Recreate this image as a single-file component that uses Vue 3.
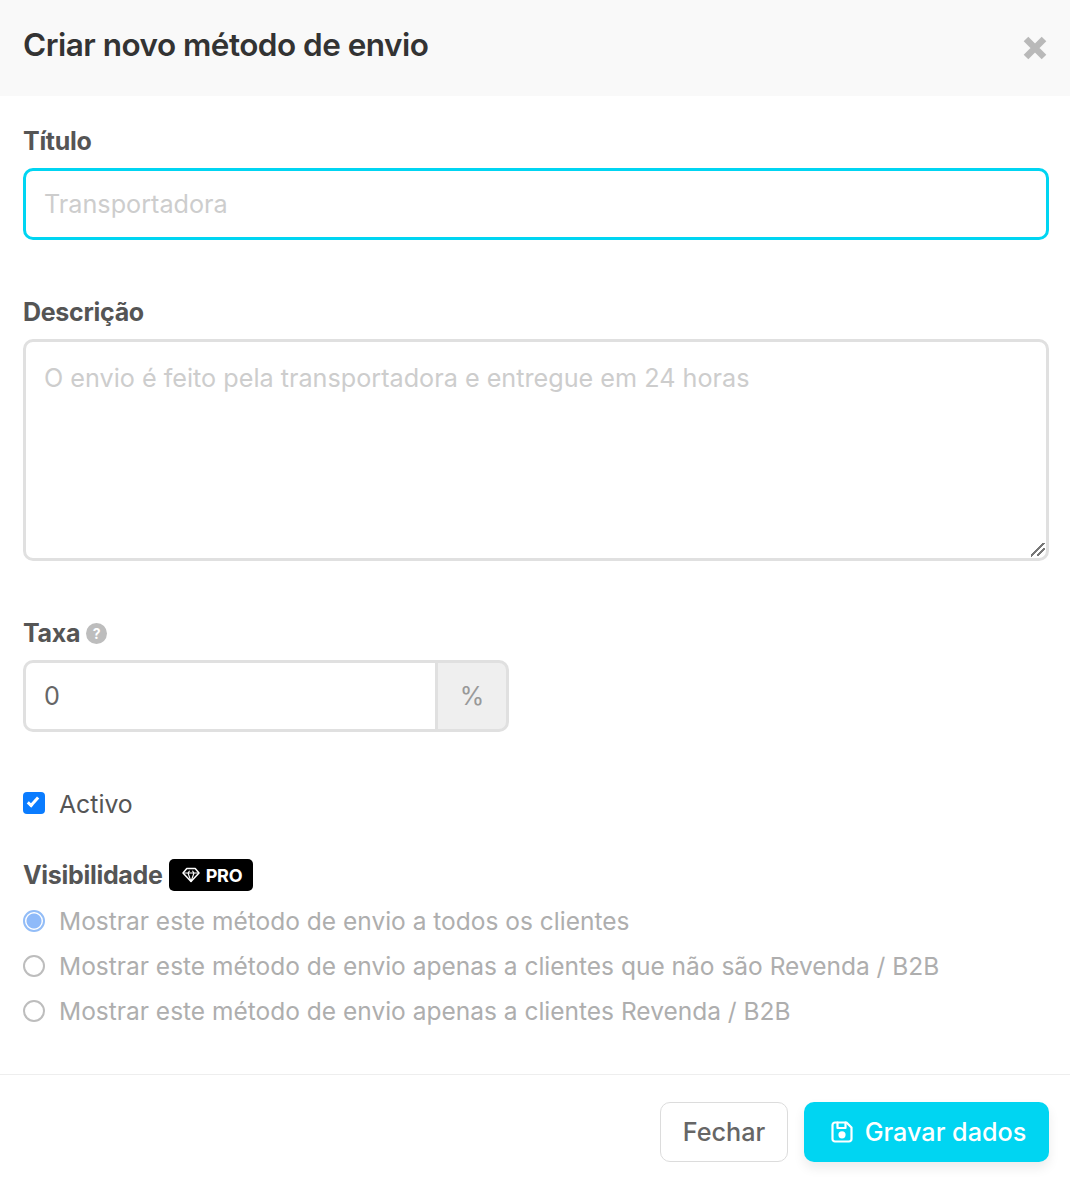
<template>
  <div class="modal">
    <header class="modal-header">
      <h2>Criar novo método de envio</h2>
      <button class="close" type="button" aria-label="Fechar">
        <svg width="24" height="24" viewBox="0 0 24 24"><path d="M3 3 21 21M21 3 3 21" stroke="#b9b9b9" stroke-width="6.500" /></svg>
      </button>
    </header>

    <form class="modal-body" @submit.prevent>
      <div class="field">
        <label class="label">Título</label>
        <input v-model="form.title" type="text" class="control focused" placeholder="Transportadora" />
      </div>

      <div class="field">
        <label class="label">Descrição</label>
        <textarea v-model="form.description" class="control area" placeholder="O envio é feito pela transportadora e entregue em 24 horas"></textarea>
      </div>

      <div class="field">
        <label class="label">
          Taxa
          <span class="help">?</span>
        </label>
        <div class="input-group">
          <input v-model="form.tax" type="text" class="control" />
          <span class="addon">%</span>
        </div>
      </div>

      <label class="check">
        <input v-model="form.active" type="checkbox" />
        Activo
      </label>

      <div class="visibility">
        <div class="label vis-label">
          Visibilidade
          <span class="pro">
            <svg width="18" height="16" viewBox="0 0 18 16" fill="none" stroke="#fff" stroke-width="1.500" stroke-linejoin="round">
              <path d="M4.800 1.500h8.400L17 6l-8 8.500L1 6z" />
              <path d="M1 6h16M6 6l3 8.500L12 6M6 6l1.600-2.200M12 6l-1.600-2.200" stroke-width="1.100" />
            </svg>
            PRO
          </span>
        </div>
        <label v-for="opt in options" :key="opt.value" class="radio">
          <input v-model="form.visibility" type="radio" :value="opt.value" disabled />
          {{ opt.text }}
        </label>
      </div>
    </form>

    <footer class="modal-footer">
      <button class="btn btn-light" type="button">Fechar</button>
      <button class="btn btn-primary" type="button">
        <svg width="24" height="24" viewBox="0 0 24 24" fill="none" stroke="#fff" stroke-width="2.200" stroke-linecap="round" stroke-linejoin="round">
          <path d="M5 2.500h11.500l5 5V19a2.500 2.500 0 0 1-2.500 2.500H5A2.500 2.500 0 0 1 2.500 19V5A2.500 2.500 0 0 1 5 2.500z" />
          <path d="M7.500 2.500v5.500h8V2.500" />
          <circle cx="12" cy="14.800" r="2.500" fill="#fff" />
        </svg>
        Gravar dados
      </button>
    </footer>
  </div>
</template>

<script setup>
import { reactive } from 'vue'

const form = reactive({
  title: '',
  description: '',
  tax: '0',
  active: true,
  visibility: 'all',
})

const options = [
  { value: 'all', text: 'Mostrar este método de envio a todos os clientes' },
  { value: 'retail', text: 'Mostrar este método de envio apenas a clientes que não são Revenda / B2B' },
  { value: 'b2b', text: 'Mostrar este método de envio apenas a clientes Revenda / B2B' },
]
</script>

<style>
html,
body {
  background: #fff;
}
</style>

<style scoped>
.modal {
  width: 1070px;
  height: 1182px;
  display: flex;
  flex-direction: column;
  font-family: Inter, "Liberation Sans", sans-serif;
  color: #4d4d4d;
  background: #fff;
  overflow: hidden;
}

.modal-header {
  height: 96px;
  flex: none;
  display: flex;
  align-items: center;
  justify-content: space-between;
  padding: 0 23px;
  background: #f9f9f9;
}

.modal-header h2 {
  margin: 0 0 6px;
  font-size: 31.500px;
  line-height: 36px;
  font-weight: 600;
  letter-spacing: -0.520px;
  color: #333;
}

.close {
  border: 0;
  padding: 0;
  background: none;
  width: 24px;
  height: 24px;
}

.modal-body {
  flex: 1;
  padding: 28px 21px 0 23px;
}

.field {
  margin-bottom: 55px;
}

.label {
  display: flex;
  align-items: center;
  gap: 6px;
  height: 34px;
  margin-bottom: 10px;
  font-size: 25px;
  font-weight: 700;
  letter-spacing: -0.300px;
  color: #555;
}

.control {
  display: block;
  width: 100%;
  height: 72px;
  box-sizing: border-box;
  padding: 0 18px;
  border: 3px solid #e0e0e0;
  border-radius: 10px;
  outline: 0;
  font-family: inherit;
  font-size: 25.200px;
  color: #666;
  background: #fff;
}

.control::placeholder {
  color: #cdcdcd;
}

.focused {
  border-color: #00d5f2;
}

.area {
  height: 222px;
  padding: 18px 18px;
  line-height: 36px;
  resize: vertical;
}

.area::-webkit-resizer {
  background:
    linear-gradient(135deg, transparent 41%, #777 41%, #777 59%, transparent 59%) 6px 5px / 8px 8px no-repeat,
    linear-gradient(135deg, transparent 45%, #777 45%, #777 55%, transparent 55%) -1px -1px / 15px 15px no-repeat;
}

.help {
  width: 21px;
  height: 21px;
  border-radius: 50%;
  background: #bdbdbd;
  color: #fff;
  font-size: 14px;
  font-weight: 700;
  line-height: 21px;
  text-align: center;
  letter-spacing: 0;
}

.input-group {
  display: flex;
  width: 486px;
  height: 72px;
}

.input-group .control {
  flex: 1;
  min-width: 0;
  border-right: 0;
  border-radius: 10px 0 0 10px;
}

.addon {
  width: 74px;
  box-sizing: border-box;
  display: flex;
  align-items: center;
  justify-content: center;
  border: 3px solid #e0e0e0;
  border-radius: 0 10px 10px 0;
  background: #efefef;
  color: #999;
  font-size: 25px;
}

.check {
  display: flex;
  align-items: center;
  gap: 14px;
  height: 34px;
  font-size: 24.800px;
  color: #555;
}

.check input {
  appearance: none;
  position: relative;
  width: 22px;
  height: 22px;
  margin: -2px 0 0;
  border-radius: 4px;
  background: #0a7cff;
}

.check input:checked::after {
  content: "";
  position: absolute;
  left: 7px;
  top: 3px;
  width: 6px;
  height: 12px;
  box-sizing: border-box;
  border: solid #fff;
  border-width: 0 3px 3px 0;
  transform: rotate(42deg);
}

.visibility {
  margin-top: 37px;
}

.vis-label {
  margin-bottom: 6px;
}

.pro {
  display: inline-flex;
  align-items: center;
  gap: 6px;
  height: 32px;
  padding: 0 11px 0 13px;
  border-radius: 5px;
  background: #000;
  color: #fff;
  font-size: 18px;
  font-weight: 700;
  letter-spacing: -0.200px;
}

.radio {
  display: flex;
  align-items: center;
  gap: 14px;
  height: 45px;
  font-size: 24.500px;
  color: #aeaeae;
}

.radio input {
  appearance: none;
  width: 22px;
  height: 22px;
  box-sizing: border-box;
  margin: 0;
  border: 2px solid #bdbdbd;
  border-radius: 50%;
  background: #fff;
}

.radio input:checked {
  border-color: #93bdf7;
  background: radial-gradient(circle, #8fbaf9 0 7px, #fff 8px);
}

.modal-footer {
  height: 108px;
  flex: none;
  display: flex;
  justify-content: flex-end;
  gap: 16px;
  box-sizing: border-box;
  padding: 27px 21px 0 0;
  border-top: 1px solid #eee;
}

.btn {
  height: 60px;
  box-sizing: border-box;
  display: inline-flex;
  align-items: center;
  justify-content: center;
  border-radius: 10px;
  font-family: inherit;
  font-size: 25.200px;
  font-weight: 500;
}

.btn-light {
  width: 128px;
  border: 1px solid #dcdcdc;
  background: #fff;
  color: #666;
}

.btn-primary {
  width: 245px;
  gap: 11px;
  padding: 0 0 0 3px;
  border: 0;
  background: #00d5f2;
  color: #fff;
  box-shadow: 0 6px 12px rgba(0, 0, 0, 0.08);
}
</style>
